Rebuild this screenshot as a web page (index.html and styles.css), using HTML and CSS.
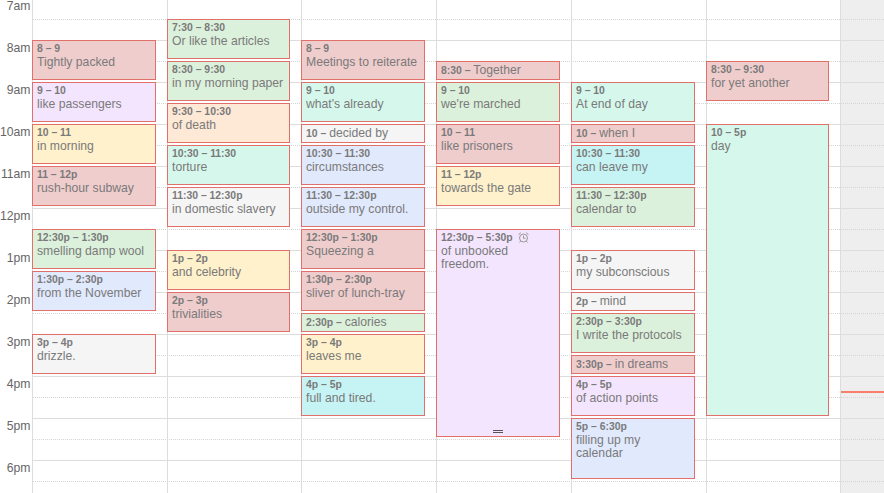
FILE: index.html
```html
<!DOCTYPE html>
<html lang="en">
<head>
    <meta charset="UTF-8">
    <title>Week</title>
    <link rel="stylesheet" href="styles.css">
</head>
<body>
    <div class="calendar">
        <div class="today-shade"><div class="now-line"></div></div>

        <div class="lines">
            <div class="line hour"></div><div class="line"></div>
            <div class="line hour"></div><div class="line"></div>
            <div class="line hour"></div><div class="line"></div>
            <div class="line hour"></div><div class="line"></div>
            <div class="line hour"></div><div class="line"></div>
            <div class="line hour"></div><div class="line"></div>
            <div class="line hour"></div><div class="line"></div>
            <div class="line hour"></div><div class="line"></div>
            <div class="line hour"></div><div class="line"></div>
            <div class="line hour"></div><div class="line"></div>
            <div class="line hour"></div><div class="line"></div>
            <div class="line hour"></div><div class="line"></div>
        </div>

        <div class="columns">
            <div class="gutter">
                <div class="hour-label">7am</div>
                <div class="hour-label">8am</div>
                <div class="hour-label">9am</div>
                <div class="hour-label">10am</div>
                <div class="hour-label">11am</div>
                <div class="hour-label">12pm</div>
                <div class="hour-label">1pm</div>
                <div class="hour-label">2pm</div>
                <div class="hour-label">3pm</div>
                <div class="hour-label">4pm</div>
                <div class="hour-label">5pm</div>
                <div class="hour-label">6pm</div>
            </div>

            <div class="day">
                <div class="event red at-3 len-2"><div class="time">8 – 9</div><div class="title">Tightly packed</div></div>
                <div class="event lilac at-5 len-2"><div class="time">9 – 10</div><div class="title">like passengers</div></div>
                <div class="event yellow at-7 len-2"><div class="time">10 – 11</div><div class="title">in morning</div></div>
                <div class="event red at-9 len-2"><div class="time">11 – 12p</div><div class="title">rush-hour subway</div></div>
                <div class="event green at-12 len-2"><div class="time">12:30p – 1:30p</div><div class="title">smelling damp wool</div></div>
                <div class="event blue at-14 len-2"><div class="time">1:30p – 2:30p</div><div class="title">from the November</div></div>
                <div class="event grey at-17 len-2"><div class="time">3p – 4p</div><div class="title">drizzle.</div></div>
            </div>

            <div class="day">
                <div class="event green at-2 len-2"><div class="time">7:30 – 8:30</div><div class="title">Or like the articles</div></div>
                <div class="event green at-4 len-2"><div class="time">8:30 – 9:30</div><div class="title">in my morning paper</div></div>
                <div class="event orange at-6 len-2"><div class="time">9:30 – 10:30</div><div class="title">of death</div></div>
                <div class="event mint at-8 len-2"><div class="time">10:30 – 11:30</div><div class="title">torture</div></div>
                <div class="event grey at-10 len-2"><div class="time">11:30 – 12:30p</div><div class="title">in domestic slavery</div></div>
                <div class="event yellow at-13 len-2"><div class="time">1p – 2p</div><div class="title">and celebrity</div></div>
                <div class="event red at-15 len-2"><div class="time">2p – 3p</div><div class="title">trivialities</div></div>
            </div>

            <div class="day">
                <div class="event red at-3 len-2"><div class="time">8 – 9</div><div class="title">Meetings to reiterate</div></div>
                <div class="event mint at-5 len-2"><div class="time">9 – 10</div><div class="title">what's already</div></div>
                <div class="event grey compact at-7 len-1"><span class="time">10 – </span><span class="title">decided by</span></div>
                <div class="event blue at-8 len-2"><div class="time">10:30 – 11:30</div><div class="title">circumstances</div></div>
                <div class="event blue at-10 len-2"><div class="time">11:30 – 12:30p</div><div class="title">outside my control.</div></div>
                <div class="event red at-12 len-2"><div class="time">12:30p – 1:30p</div><div class="title">Squeezing a</div></div>
                <div class="event red at-14 len-2"><div class="time">1:30p – 2:30p</div><div class="title">sliver of lunch-tray</div></div>
                <div class="event green compact at-16 len-1"><span class="time">2:30p – </span><span class="title">calories</span></div>
                <div class="event yellow at-17 len-2"><div class="time">3p – 4p</div><div class="title">leaves me</div></div>
                <div class="event cyan at-19 len-2"><div class="time">4p – 5p</div><div class="title">full and tired.</div></div>
            </div>

            <div class="day">
                <div class="event red compact at-4 len-1"><span class="time">8:30 – </span><span class="title">Together</span></div>
                <div class="event green at-5 len-2"><div class="time">9 – 10</div><div class="title">we're marched</div></div>
                <div class="event red at-7 len-2"><div class="time">10 – 11</div><div class="title">like prisoners</div></div>
                <div class="event yellow at-9 len-2"><div class="time">11 – 12p</div><div class="title">towards the gate</div></div>
                <div class="event lilac at-12 len-10">
                    <div class="time">12:30p – 5:30p
                        <svg class="alarm" viewBox="0 0 11 11" width="11" height="11">
                            <circle cx="5.5" cy="6" r="4" fill="none" stroke="#999"/>
                            <path d="M5.5 3.5V6.3H7.5M0.5 2.6L2.8 0.7M10.5 2.6L8.2 0.7M2.6 9.2L1.6 10.5M8.4 9.2L9.4 10.5" fill="none" stroke="#999"/>
                        </svg>
                    </div>
                    <div class="title">of unbooked freedom.</div>
                    <div class="drag-handle"></div>
                </div>
            </div>

            <div class="day">
                <div class="event mint at-5 len-2"><div class="time">9 – 10</div><div class="title">At end of day</div></div>
                <div class="event red compact at-7 len-1"><span class="time">10 – </span><span class="title">when I</span></div>
                <div class="event cyan at-8 len-2"><div class="time">10:30 – 11:30</div><div class="title">can leave my</div></div>
                <div class="event green at-10 len-2"><div class="time">11:30 – 12:30p</div><div class="title">calendar to</div></div>
                <div class="event grey at-13 len-2"><div class="time">1p – 2p</div><div class="title">my subconscious</div></div>
                <div class="event grey compact at-15 len-1"><span class="time">2p – </span><span class="title">mind</span></div>
                <div class="event green at-16 len-2"><div class="time">2:30p – 3:30p</div><div class="title">I write the protocols</div></div>
                <div class="event red compact at-18 len-1"><span class="time">3:30p – </span><span class="title">in dreams</span></div>
                <div class="event lilac at-19 len-2"><div class="time">4p – 5p</div><div class="title">of action points</div></div>
                <div class="event blue at-21 len-3"><div class="time">5p – 6:30p</div><div class="title">filling up my calendar</div></div>
            </div>

            <div class="day">
                <div class="event red at-4 len-2"><div class="time">8:30 – 9:30</div><div class="title">for yet another</div></div>
                <div class="event mint at-7 len-14"><div class="time">10 – 5p</div><div class="title">day</div></div>
            </div>

            <div class="day last"></div>
        </div>
    </div>
</body>
</html>
```

FILE: styles.css
```css
html, body {
    height: 100%;
    margin: 0;
    overflow: hidden;
}
body {
    font-family: "Liberation Sans", Arial, sans-serif;
    font-size: 12.2px;
    color: #666;
    background-color: white;
}
.calendar {
    display: grid;
    height: 504px;
    margin-top: -2px;
}
.today-shade, .lines, .columns {
    grid-area: 1 / 1;
}
.today-shade {
    justify-self: end;
    width: 43px;
    background-color: #eee;
}
.now-line {
    height: 2px;
    margin-top: 393px;
    background-color: #f87d6c;
}
.lines {
    margin-left: 32px;
}
.line {
    box-sizing: border-box;
    height: 21px;
    border-top: 1px dotted #d4d4d4;
}
.line.hour {
    border-top: 1px solid #ddd;
}
.columns {
    display: grid;
    grid-template-columns: 32px 135px 134px 135px 135px 135px 134px 1fr;
}
.gutter {
    padding-top: 2px;
}
.hour-label {
    height: 42px;
    padding-right: 1.5px;
    box-sizing: border-box;
    line-height: 13px;
    text-align: right;
    white-space: nowrap;
}
.day {
    display: grid;
    grid-template-rows: repeat(24, 21px);
    grid-template-columns: 1fr;
    padding-right: 11px;
    box-shadow: inset 1px 0 #ddd;
}
.event {
    display: flex;
    flex-direction: column;
    box-sizing: border-box;
    min-width: 0;
    margin-bottom: 2px;
    padding: 1px 4px 0;
    overflow: hidden;
    border: 1px solid #e2706a;
    color: #7a7a7a;
}
.event.compact {
    display: block;
    line-height: 16px;
    padding-top: 0;
    white-space: nowrap;
}
.time {
    font-size: 10.4px;
    font-weight: bold;
    line-height: 13px;
}
.title {
    line-height: 13px;
    padding-top: 1px;
}
.compact .title {
    padding-top: 0;
}
.alarm {
    margin-left: 2px;
    vertical-align: -2px;
}
.drag-handle {
    align-self: center;
    width: 10px;
    height: 1px;
    margin-top: auto;
    margin-bottom: 3px;
    border-top: 1px solid #555;
    border-bottom: 1px solid #555;
}

.red { background-color: #f0cdcd; }
.lilac { background-color: #f4e5fe; }
.yellow { background-color: #fef1cb; }
.green { background-color: #dcf1dc; }
.orange { background-color: #fee8d6; }
.mint { background-color: #d6f8ec; }
.grey { background-color: #f5f5f5; }
.blue { background-color: #e1e9fd; }
.cyan { background-color: #c6f3f3; }

.at-2 { grid-row-start: 2; }
.at-3 { grid-row-start: 3; }
.at-4 { grid-row-start: 4; }
.at-5 { grid-row-start: 5; }
.at-6 { grid-row-start: 6; }
.at-7 { grid-row-start: 7; }
.at-8 { grid-row-start: 8; }
.at-9 { grid-row-start: 9; }
.at-10 { grid-row-start: 10; }
.at-12 { grid-row-start: 12; }
.at-13 { grid-row-start: 13; }
.at-14 { grid-row-start: 14; }
.at-15 { grid-row-start: 15; }
.at-16 { grid-row-start: 16; }
.at-17 { grid-row-start: 17; }
.at-18 { grid-row-start: 18; }
.at-19 { grid-row-start: 19; }
.at-21 { grid-row-start: 21; }

.len-1 { grid-row-end: span 1; }
.len-2 { grid-row-end: span 2; }
.len-3 { grid-row-end: span 3; }
.len-10 { grid-row-end: span 10; }
.len-14 { grid-row-end: span 14; }
```
